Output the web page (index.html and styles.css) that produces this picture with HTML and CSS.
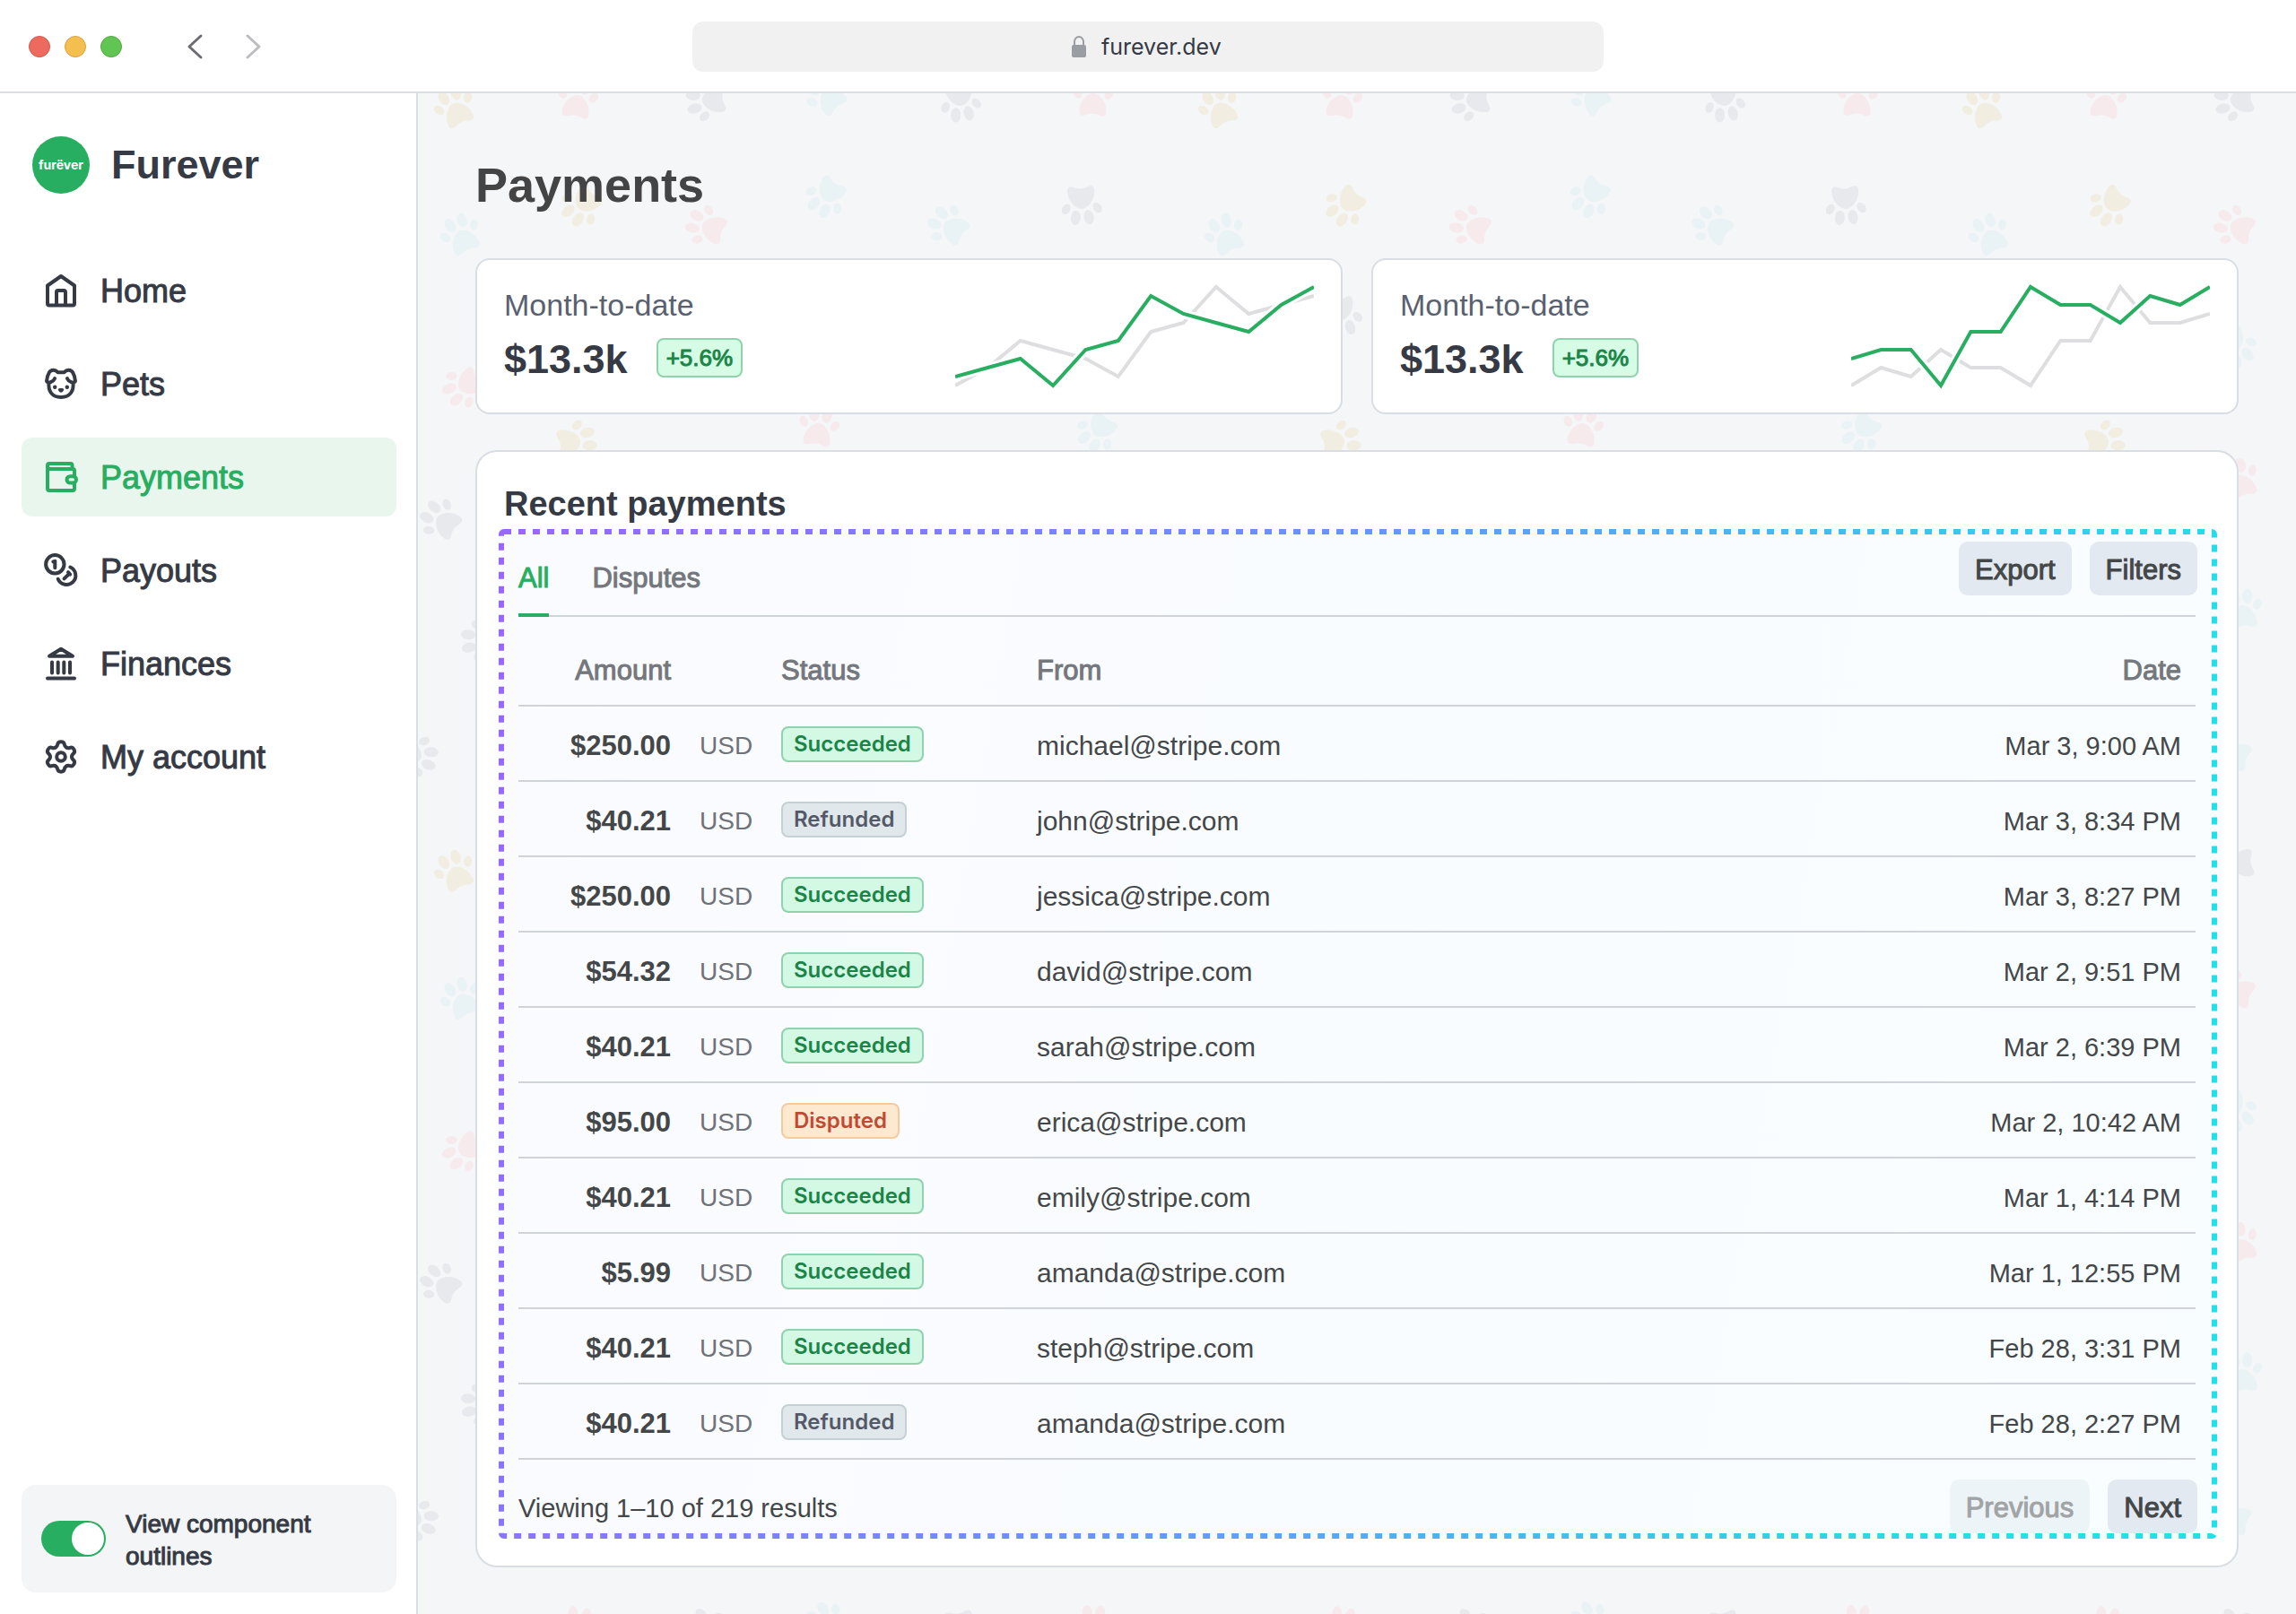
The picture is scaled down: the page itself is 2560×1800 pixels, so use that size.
FILE: index.html
```html
<!DOCTYPE html>
<html lang="en">
<head>
<meta charset="utf-8">
<title>Furever – Payments</title>
<link rel="stylesheet" href="styles.css">
</head>
<body>
<svg class="defs" width="0" height="0" aria-hidden="true">
  <defs>
    <g id="paw">
      <path d="M0-4C7-4 15 6 15 15C15.500 21 12 22 8 20.500C3 18-3 18-8 20.500C-12 22-15.500 21-15 15C-15 6-7-4 0-4Z"/>
      <ellipse cx="-17.500" cy="-3.500" rx="4.500" ry="6.200" transform="rotate(-32 -17.500 -3.500)"/>
      <ellipse cx="17.500" cy="-3.500" rx="4.500" ry="6.200" transform="rotate(32 17.500 -3.500)"/>
      <ellipse cx="-7.300" cy="-13.500" rx="5.500" ry="8.200" transform="rotate(-8 -7.300 -13.500)"/>
      <ellipse cx="7.300" cy="-13.500" rx="5.500" ry="8.200" transform="rotate(8 7.300 -13.500)"/>
    </g>
    <path id="cog" d="M14 9.600C15.700 8.600 16 7.600 16.200 6.200C16.800 2.400 23.200 2.400 23.800 6.200C24 7.600 24.300 8.600 26 9.600"/>
  </defs>
</svg>

<header class="browser">
  <div class="browser-left">
    <div class="lights"><span class="light red"></span><span class="light amber"></span><span class="light green"></span></div>
    <div class="history">
      <button type="button" aria-label="Back"><svg width="20" height="32" viewBox="0 0 20 32"><path d="M16 4L3 16L16 28"/></svg></button>
      <button type="button" aria-label="Forward" class="dim"><svg width="20" height="32" viewBox="0 0 20 32"><path d="M4 4L17 16L4 28"/></svg></button>
    </div>
  </div>
  <label class="address">
    <svg width="18" height="26" viewBox="0 0 18 26" aria-hidden="true"><rect x="1" y="11" width="16" height="14" rx="2" fill="#9a9da1"/><path d="M4 12V7.500a5 5.500 0 0 1 10 0V12" fill="none" stroke="#9a9da1" stroke-width="2"/></svg>
    <input type="text" value="furever.dev" aria-label="Address">
  </label>
  <div class="browser-right"></div>
</header>

<div class="app">
  <aside class="sidebar">
    <div class="brand"><span class="logo">furëver</span><span class="brand-name">Furever</span></div>
    <nav class="nav">
      <a href="#home"><svg viewBox="0 0 40 40"><path d="M5 14.500L20 4L35 14.500V34.500a2 2 0 0 1-2 2H7a2 2 0 0 1-2-2Z"/><path d="M15 36V21.500a1.500 1.500 0 0 1 1.500-1.500h7a1.500 1.500 0 0 1 1.500 1.500V36"/></svg><span>Home</span></a>
      <a href="#pets"><svg viewBox="0 0 40 40"><path d="M16.500 7.200C13.500 4 9 4 6.800 7.500C5 10.500 4.200 13.500 4 17C4.200 18.600 6.500 19 8.500 18.200C10.800 17.200 12.300 15.800 13 14.200M23.500 7.200C26.500 4 31 4 33.200 7.500C35 10.500 35.800 13.500 36 17C35.800 18.600 33.500 19 31.500 18.200C29.200 17.200 27.700 15.800 27 14.200M16.500 7.200H23.500M6.500 19C5.500 28 10 35 20 35S34.500 28 33.500 19"/><g class="solid"><circle cx="13.200" cy="23.700" r="2.200"/><circle cx="26.800" cy="23.700" r="2.200"/><path d="M16.800 26.200c0-1.600 6.400-1.600 6.400 0c0 1.600-2.200 3.600-3.200 3.600s-3.200-2-3.200-3.600z"/></g></svg><span>Pets</span></a>
      <a href="#payments" class="active" aria-current="page"><svg viewBox="0 0 40 40"><path d="M32.500 10V7a2 2 0 0 0-2-2H7a2 2 0 0 0-2 2V33a2 2 0 0 0 2 2H33a2 2 0 0 0 2-2V27M35 19V13a2 2 0 0 0-2-2H5"/><rect x="26.500" y="19.200" width="10.500" height="7.400" rx="3.700"/></svg><span>Payments</span></a>
      <a href="#payouts"><svg viewBox="0 0 40 40"><circle cx="13.300" cy="13.300" r="10.200"/><path d="M30.300 16.500A10.200 10.200 0 1 1 16.700 29.700M11.300 10.400L13.300 9.800V17.200M28 22.200L30.200 24.600M29.300 23.800L23.500 29.400"/></svg><span>Payouts</span></a>
      <a href="#finances"><svg viewBox="0 0 40 40"><path d="M20 3.800L33 11.700H7ZM10 18.500V30.500M16.700 18.500V30.500M23.300 18.500V30.500M30 18.500V30.500M5 36.600H35"/></svg><span>Finances</span></a>
      <a href="#account"><svg viewBox="0 0 40 40"><use href="#cog"/><use href="#cog" transform="rotate(60 20 20)"/><use href="#cog" transform="rotate(120 20 20)"/><use href="#cog" transform="rotate(180 20 20)"/><use href="#cog" transform="rotate(240 20 20)"/><use href="#cog" transform="rotate(300 20 20)"/><circle cx="20" cy="20" r="4.800"/></svg><span>My account</span></a>
    </nav>
    <label class="outline-toggle"><input type="checkbox" role="switch" checked><span>View component outlines</span></label>
  </aside>

  <main class="main">
    <svg class="paws" width="100%" height="100%" aria-hidden="true">
      <defs>
        <pattern id="paw-pattern" patternUnits="userSpaceOnUse" x="-40" y="-65" width="852" height="852">
          <g transform="translate(40 65)">
            <g fill="#f1ede0">
              <use href="#paw" transform="translate(41 15) rotate(-24)"/>
              <use href="#paw" transform="translate(182 126) rotate(-138)"/>
              <use href="#paw" transform="translate(177 388) rotate(80)"/>
            </g>
            <g fill="#f6eaec">
              <use href="#paw" transform="translate(178 6) rotate(9)"/>
              <use href="#paw" transform="translate(753 4) rotate(2)"/>
              <use href="#paw" transform="translate(321 148) rotate(-69)"/>
              <use href="#paw" transform="translate(50 328) rotate(-124)"/>
              <use href="#paw" transform="translate(447 372) rotate(9)"/>
              <use href="#paw" transform="translate(326 430) rotate(-20)"/>
            </g>
            <g fill="#e9f2f4">
              <use href="#paw" transform="translate(48 157) rotate(-24)"/>
              <use href="#paw" transform="translate(455 1) rotate(-41)"/>
              <use href="#paw" transform="translate(455 116) rotate(-146)"/>
              <use href="#paw" transform="translate(591 147) rotate(-56)"/>
              <use href="#paw" transform="translate(757 378) rotate(-142)"/>
              <use href="#paw" transform="translate(323 283) rotate(150)"/>
              <use href="#paw" transform="translate(330 575) rotate(-6)"/>
              <use href="#paw" transform="translate(317 736) rotate(-70)"/>
            </g>
            <g fill="#e8e9ed">
              <use href="#paw" transform="translate(321 8) rotate(-97)"/>
              <use href="#paw" transform="translate(605 10) rotate(172)"/>
              <use href="#paw" transform="translate(740 125) rotate(177)"/>
              <use href="#paw" transform="translate(178 249) rotate(170)"/>
              <use href="#paw" transform="translate(25 475) rotate(-55)"/>
              <use href="#paw" transform="translate(70 610) rotate(-94)"/>
              <use href="#paw" transform="translate(0 739) rotate(102)"/>
            </g>
          </g>
        </pattern>
      </defs>
      <rect width="100%" height="100%" fill="url(#paw-pattern)"/>
    </svg>

    <h1>Payments</h1>

    <section class="stats">
      <article class="stat">
        <div class="stat-text">
          <h2>Month-to-date</h2>
          <p><strong>$13.3k</strong><span class="delta">+5.6%</span></p>
        </div>
        <svg class="chart" width="400" height="114" viewBox="0 -2 400 114" role="img" aria-label="Trend">
          <polyline class="prev" points="0,110 36.360,90 72.730,60 109.090,70 145.450,80 181.820,100 218.180,50 254.550,40 290.910,0 327.270,30 363.640,20 400,10"/>
          <polyline class="halo" points="0,100 36.360,90 72.730,80 109.090,110 145.450,70 181.820,60 218.180,10 254.550,30 290.910,40 327.270,50 363.640,20 400,0"/>
          <polyline class="now" points="0,100 36.360,90 72.730,80 109.090,110 145.450,70 181.820,60 218.180,10 254.550,30 290.910,40 327.270,50 363.640,20 400,0"/>
        </svg>
      </article>
      <article class="stat">
        <div class="stat-text">
          <h2>Month-to-date</h2>
          <p><strong>$13.3k</strong><span class="delta">+5.6%</span></p>
        </div>
        <svg class="chart" width="400" height="114" viewBox="0 -2 400 114" role="img" aria-label="Trend">
          <polyline class="prev" points="0,110 33.330,90 66.670,100 100,70 133.330,90 166.670,90 200,110 233.330,60 266.670,60 300,0 333.330,40 366.670,40 400,30"/>
          <polyline class="halo" points="0,80 33.330,70 66.670,70 100,110 133.330,50 166.670,50 200,0 233.330,20 266.670,20 300,40 333.330,10 366.670,20 400,0"/>
          <polyline class="now" points="0,80 33.330,70 66.670,70 100,110 133.330,50 166.670,50 200,0 233.330,20 266.670,20 300,40 333.330,10 366.670,20 400,0"/>
        </svg>
      </article>
    </section>

    <section class="recent">
      <h2>Recent payments</h2>
      <div class="component">
        <svg class="outline" width="100%" height="100%" aria-hidden="true">
          <defs>
            <linearGradient id="edge" x1="0" y1="0" x2="1" y2=".15">
              <stop offset="0" stop-color="#9a66ff"/>
              <stop offset=".45" stop-color="#6a90fb"/>
              <stop offset="1" stop-color="#22e0e8"/>
            </linearGradient>
          </defs>
          <rect class="outline-edge" x="3" y="3" rx="3" stroke="url(#edge)"/>
        </svg>
        <div class="toolbar">
          <div class="tabs" role="tablist">
            <button type="button" role="tab" aria-selected="true" class="tab current">All</button>
            <button type="button" role="tab" aria-selected="false" class="tab">Disputes</button>
          </div>
          <div class="actions"><button type="button" class="btn">Export</button><button type="button" class="btn">Filters</button></div>
        </div>
        <table>
          <thead><tr><th class="amount">Amount</th><th class="currency"></th><th class="status">Status</th><th class="from">From</th><th class="date">Date</th></tr></thead>
          <tbody>
            <tr><td class="amount">$250.00</td><td class="currency">USD</td><td class="status"><span class="badge ok">Succeeded</span></td><td class="from">michael@stripe.com</td><td class="date">Mar 3, 9:00 AM</td></tr>
            <tr><td class="amount">$40.21</td><td class="currency">USD</td><td class="status"><span class="badge muted">Refunded</span></td><td class="from">john@stripe.com</td><td class="date">Mar 3, 8:34 PM</td></tr>
            <tr><td class="amount">$250.00</td><td class="currency">USD</td><td class="status"><span class="badge ok">Succeeded</span></td><td class="from">jessica@stripe.com</td><td class="date">Mar 3, 8:27 PM</td></tr>
            <tr><td class="amount">$54.32</td><td class="currency">USD</td><td class="status"><span class="badge ok">Succeeded</span></td><td class="from">david@stripe.com</td><td class="date">Mar 2, 9:51 PM</td></tr>
            <tr><td class="amount">$40.21</td><td class="currency">USD</td><td class="status"><span class="badge ok">Succeeded</span></td><td class="from">sarah@stripe.com</td><td class="date">Mar 2, 6:39 PM</td></tr>
            <tr><td class="amount">$95.00</td><td class="currency">USD</td><td class="status"><span class="badge warn">Disputed</span></td><td class="from">erica@stripe.com</td><td class="date">Mar 2, 10:42 AM</td></tr>
            <tr><td class="amount">$40.21</td><td class="currency">USD</td><td class="status"><span class="badge ok">Succeeded</span></td><td class="from">emily@stripe.com</td><td class="date">Mar 1, 4:14 PM</td></tr>
            <tr><td class="amount">$5.99</td><td class="currency">USD</td><td class="status"><span class="badge ok">Succeeded</span></td><td class="from">amanda@stripe.com</td><td class="date">Mar 1, 12:55 PM</td></tr>
            <tr><td class="amount">$40.21</td><td class="currency">USD</td><td class="status"><span class="badge ok">Succeeded</span></td><td class="from">steph@stripe.com</td><td class="date">Feb 28, 3:31 PM</td></tr>
            <tr><td class="amount">$40.21</td><td class="currency">USD</td><td class="status"><span class="badge muted">Refunded</span></td><td class="from">amanda@stripe.com</td><td class="date">Feb 28, 2:27 PM</td></tr>
          </tbody>
        </table>
        <footer class="pager">
          <p>Viewing 1–10 of 219 results</p>
          <div class="actions"><button type="button" class="btn" disabled>Previous</button><button type="button" class="btn">Next</button></div>
        </footer>
      </div>
    </section>
  </main>
</div>
</body>
</html>
```
FILE: styles.css
```css
* { box-sizing: border-box; }

:root {
  --ink: #353a44;
  --line: #d8dee4;
  --rule: #d0d3d8;
  --green: #27ae60;
  --sans: "Liberation Sans", Arial, sans-serif;
}

body {
  margin: 0;
  min-height: 100vh;
  display: flex;
  flex-direction: column;
  font-family: var(--sans);
  color: var(--ink);
  background: #fff;
}

h1, h2, p { margin: 0; }

button, input {
  font: inherit;
  color: inherit;
}

button {
  border: 0;
  padding: 0;
  background: none;
}

.defs { position: absolute; }

/* Browser bar */
.browser {
  display: flex;
  align-items: center;
  height: 104px;
  padding: 2px 32px 0;
  border-bottom: 2px solid var(--line);
}

.browser-left, .browser-right { flex: 1; }

.browser-left {
  display: flex;
  align-items: center;
  gap: 72px;
}

.lights { display: flex; gap: 16px; }

.light {
  width: 24px;
  height: 24px;
  border-radius: 50%;
  border: 1px solid;
}

.red { background: #ed6a5e; border-color: #d5574c; }
.amber { background: #f5bf4f; border-color: #d9a13d; }
.green { background: #61c554; border-color: #51a73e; }

.history { display: flex; gap: 44px; }
.history button { display: flex; }

.history svg {
  fill: none;
  stroke: #6c6c72;
  stroke-width: 3;
  stroke-linecap: round;
  stroke-linejoin: round;
}

.history .dim svg { stroke: #bcbcc1; }

.address {
  display: flex;
  align-items: center;
  justify-content: center;
  gap: 16px;
  flex: 0 1 1016px;
  height: 56px;
  border-radius: 12px;
  background: #f1f1f1;
}

.address input {
  width: 138px;
  padding: 0;
  border: 0;
  background: none;
  font: 25px/32px Inter, sans-serif;
}

/* Page frame */
.app {
  flex: 1;
  display: flex;
}

.sidebar {
  flex: 0 0 466px;
  display: flex;
  flex-direction: column;
  padding: 48px 22px 24px 24px;
  border-right: 2px solid var(--line);
}

.brand {
  display: flex;
  align-items: center;
  gap: 24px;
  padding-left: 12px;
  margin-bottom: 64px;
}

.logo {
  display: flex;
  align-items: center;
  justify-content: center;
  width: 64px;
  height: 64px;
  border-radius: 50%;
  background: var(--green);
  color: #fff;
  font: 700 14px/16px Inter, sans-serif;
}

.brand-name { font-size: 45px; font-weight: 700; }

.nav {
  display: flex;
  flex-direction: column;
  gap: 16px;
}

.nav a {
  display: flex;
  align-items: center;
  gap: 24px;
  height: 88px;
  padding: 0 24px;
  border-radius: 12px;
  color: var(--ink);
  font-size: 36px;
  text-decoration: none;
  -webkit-text-stroke: 1px currentColor;
}

.nav span { padding-top: 2px; }

.nav svg {
  width: 40px;
  height: 40px;
  fill: none;
  stroke: currentColor;
  stroke-width: 4;
  stroke-linecap: round;
  stroke-linejoin: round;
}

.nav .solid { fill: currentColor; stroke: none; }

.nav .active { background: #e9f6ee; color: var(--green); }

.outline-toggle {
  display: flex;
  align-items: center;
  gap: 22px;
  height: 120px;
  margin-top: auto;
  padding: 0 22px;
  border-radius: 16px;
  background: #f4f5f7;
  font-size: 28px;
  line-height: 36px;
  -webkit-text-stroke: 1px currentColor;
}

.outline-toggle span { padding-top: 4px; }

.outline-toggle input {
  appearance: none;
  flex: none;
  display: flex;
  justify-content: flex-end;
  width: 72px;
  height: 40px;
  margin: 0;
  padding: 2px;
  border-radius: 20px;
  background: var(--green);
}

.outline-toggle input::before {
  content: "";
  width: 36px;
  height: 36px;
  border-radius: 50%;
  background: #fff;
}

/* Main column */
.main {
  position: relative;
  z-index: 0;
  flex: 1;
  min-width: 0;
  padding: 70px 64px 52px;
  background: #f5f6f8;
}

.paws {
  position: absolute;
  inset: 0;
  z-index: -1;
}

h1 {
  margin-bottom: 50px;
  color: #444;
  font-size: 54px;
  line-height: 64px;
}

.stats {
  display: grid;
  grid-template-columns: 1fr 1fr;
  gap: 32px;
  margin-bottom: 40px;
}

.stat {
  display: flex;
  justify-content: space-between;
  padding: 28px 30px;
  border: 2px solid var(--line);
  border-radius: 16px;
  background: #fff;
}

.stat h2 {
  margin-bottom: 12px;
  color: #596171;
  font-size: 34px;
  font-weight: 400;
  line-height: 45px;
}

.stat p {
  display: flex;
  align-items: center;
  gap: 32px;
}

.stat strong {
  padding-top: 4px;
  font-size: 45px;
  line-height: 44px;
}

.delta {
  height: 44px;
  padding: 0 9px;
  border: 2px solid #8fd3ae;
  border-radius: 8px;
  background: #d7fce5;
  color: #1b8548;
  font-size: 26px;
  line-height: 40px;
  -webkit-text-stroke: 1px currentColor;
}

.chart {
  overflow: visible;
  clip-path: inset(-8px 0);
  fill: none;
  stroke-width: 4;
}

.prev { stroke: #dedee0; }
.halo { stroke: #fff; stroke-width: 10; }
.now { stroke: var(--green); }

/* Payments list */
.recent {
  padding: 34px 22px 30px 24px;
  border: 2px solid var(--line);
  border-radius: 24px;
  background: #fff;
}

.recent h2 {
  margin-bottom: 4px;
  padding-left: 6px;
  font-size: 38px;
  line-height: 48px;
}

.component {
  position: relative;
  z-index: 0;
  padding: 14px 24px 6px 22px;
  background: linear-gradient(100deg, #fafbff, #f8fdff);
  color: #444748;
  font-size: 30px;
  line-height: 40px;
}

.outline {
  position: absolute;
  inset: 0;
  z-index: -1;
}

.outline-edge {
  width: calc(100% - 6px);
  height: calc(100% - 6px);
  fill: none;
  stroke-width: 6;
  stroke-dasharray: 8 8;
}

.toolbar {
  display: flex;
  justify-content: space-between;
  height: 84px;
  border-bottom: 2px solid var(--rule);
}

.tabs {
  display: flex;
  align-items: flex-end;
  gap: 48px;
  margin-bottom: -2px;
}

.tab {
  padding-bottom: 19px;
  border-bottom: 4px solid transparent;
  color: #74777c;
  font-size: 31px;
  line-height: 40px;
  -webkit-text-stroke: 1px currentColor;
}

.tab.current {
  border-color: var(--green);
  color: var(--green);
}

.actions {
  display: flex;
  gap: 20px;
  margin-right: -2px;
}

.btn {
  height: 60px;
  padding: 4px 18px 0;
  border-radius: 10px;
  background: #e3e9f0;
  color: #444748;
  font-size: 31px;
  -webkit-text-stroke: 1px currentColor;
}

.btn:disabled { background: #edf4f7; color: #a0a4a6; }

table {
  width: 100%;
  table-layout: fixed;
  border-spacing: 0;
}

th, td {
  padding: 24px 0 18px;
  border-bottom: 2px solid var(--rule);
  text-align: left;
}

th {
  padding: 40px 0 18px;
  color: #74777c;
  font-size: 31px;
  font-weight: 400;
  -webkit-text-stroke: 1px currentColor;
}

.amount { width: 170px; text-align: right; }
td.amount { font-size: 31px; font-weight: 700; }
.currency { width: 123px; padding-left: 32px; color: #6f7277; font-size: 28px; }
.status { width: 285px; }
td.status { padding: 22px 0 20px; }
.date { width: 360px; padding-right: 16px; text-align: right; }
td.date { font-size: 29px; }

.badge {
  display: block;
  width: fit-content;
  height: 40px;
  padding: 0 12px;
  border: 2px solid;
  border-radius: 8px;
  font: 600 24px/35px Inter, sans-serif;
}

.ok { border-color: #8fd3ae; background: #d3f9e5; color: #1b8548; }
.muted { border-color: #c5d0d6; background: #e1e8eb; color: #545969; }
.warn { border-color: #f8c99c; background: #fde9cf; color: #c24a35; }

.pager {
  display: flex;
  align-items: center;
  justify-content: space-between;
  padding-top: 22px;
}

.pager p { padding-top: 4px; font-size: 29px; }
```
